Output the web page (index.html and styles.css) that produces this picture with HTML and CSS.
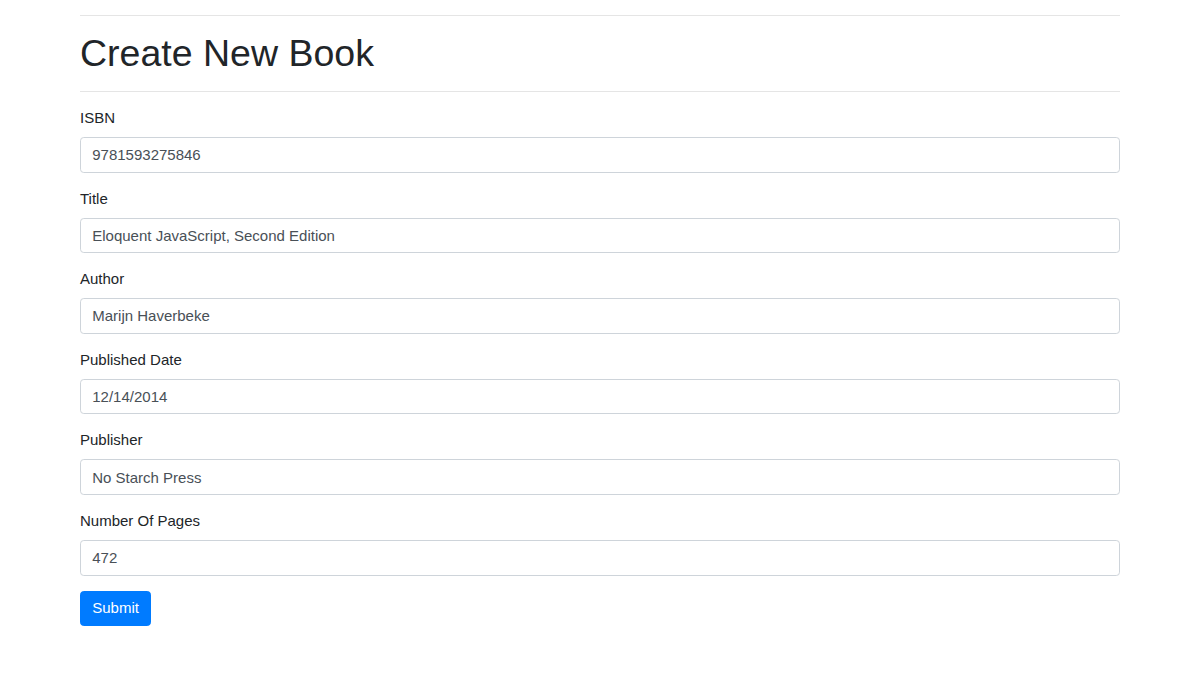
FILE: index.html
```html
<!doctype html>
<html lang="en">
<head>
    <meta charset="UTF-8">
    <meta name="viewport" content="width=device-width, initial-scale=1.0">
    <title>Create New Book</title>
    <link rel="stylesheet" href="styles.css">
</head>
<body>
    <div class="container">
        <hr>
        <h1 class="title">Create New Book</h1>
        <hr>
        <form class="book-form">
            <div class="form-group">
                <label for="isbn">ISBN</label>
                <input class="form-control" id="isbn" type="text" value="9781593275846">
            </div>
            <div class="form-group">
                <label for="title">Title</label>
                <input class="form-control" id="title" type="text" value="Eloquent JavaScript, Second Edition">
            </div>
            <div class="form-group">
                <label for="author">Author</label>
                <input class="form-control" id="author" type="text" value="Marijn Haverbeke">
            </div>
            <div class="form-group">
                <label for="published">Published Date</label>
                <input class="form-control" id="published" type="text" value="12/14/2014">
            </div>
            <div class="form-group">
                <label for="publisher">Publisher</label>
                <input class="form-control" id="publisher" type="text" value="No Starch Press">
            </div>
            <div class="form-group">
                <label for="pages">Number Of Pages</label>
                <input class="form-control" id="pages" type="text" value="472">
            </div>
            <button class="btn-primary" type="button">Submit</button>
        </form>
    </div>
</body>
</html>
```

FILE: styles.css
```css
html , body
{
    margin : 0px ;
    padding : 0px ;
    background : #ffffff ;
}
body
{
    font-family : "Liberation Sans" , Arial , sans-serif ;
    font-size : 15px ;
    line-height : 1.5 ;
    color : #212529 ;
}
.container
{
    max-width : 1040px ;
    margin : 0 auto ;
}
hr
{
    margin : 15px 0 ;
    border : 0 ;
    border-top : 1px solid rgba(0 , 0 , 0 , 0.1) ;
    height : 0 ;
}
.title
{
    margin : 0 0 7.5px ;
    font-size : 37.5px ;
    font-weight : 500 ;
    line-height : 1.2 ;
}
.form-group
{
    margin-bottom : 15px ;
}
label
{
    display : inline-block ;
    margin-bottom : 7.5px ;
}
.form-control
{
    display : block ;
    box-sizing : border-box ;
    width : 100% ;
    height : 35.6px ;
    margin : 0 ;
    padding : 5.6px 11.25px ;
    font-family : inherit ;
    font-size : 15px ;
    line-height : 1.5 ;
    color : #495057 ;
    background : #ffffff ;
    border : 1px solid #ced4da ;
    border-radius : 3.75px ;
}
.btn-primary
{
    display : inline-block ;
    margin : 0 ;
    padding : 5.6px 11.25px ;
    font-family : inherit ;
    font-size : 15px ;
    line-height : 1.5 ;
    color : #ffffff ;
    background : #007bff ;
    border : 1px solid #007bff ;
    border-radius : 3.75px ;
    cursor : pointer ;
}
```
